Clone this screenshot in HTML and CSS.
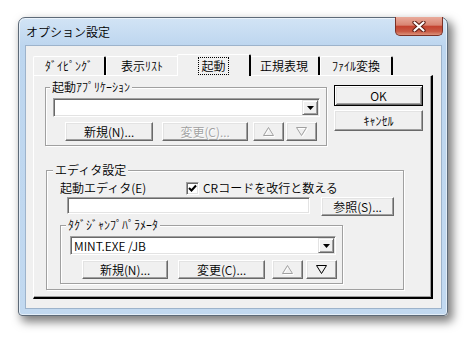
FILE: index.html
```html
<html>
  <head>
    <title>オプション設定</title>
    <link rel="stylesheet" href="styles.css">
  </head>
  <body>
    <div class="window">
      <div class="titlebar">
        <span class="title">オプション設定</span>
        <div class="close">
          <svg width="14" height="11" viewBox="0 0 14 11">
            <path d="M2.5 1.5 L11.5 9.5 M11.5 1.5 L2.5 9.5" stroke="#5a1d14" stroke-width="4.2" stroke-linecap="round"/>
            <path d="M2.5 1.5 L11.5 9.5 M11.5 1.5 L2.5 9.5" stroke="#fff" stroke-width="2.2" stroke-linecap="round"/>
          </svg>
        </div>
      </div>
      <div class="client">
        <div class="tabs">
          <div class="tab t1">ﾀﾞｲﾋﾟﾝｸﾞ</div>
          <div class="tab t2">表示ﾘｽﾄ</div>
          <div class="tab t3 active"><span class="focus">起動</span></div>
          <div class="tab t4">正規表現</div>
          <div class="tab t5">ﾌｧｲﾙ変換</div>
        </div>
        <div class="panel">
          <div class="top-row">
            <div class="group g-app">
              <div class="group-label">起動ｱﾌﾟﾘｹｰｼｮﾝ</div>
              <div class="group-body">
                <div class="combo sunken c-app">
                  <span class="combo-text"></span>
                  <span class="drop"><svg width="7" height="4" viewBox="0 0 7 4"><polygon points="0,0 7,0 3.5,4" fill="#000"/></svg></span>
                </div>
                <div class="btn-row">
                  <button class="btn b-new">新規(N)...</button>
                  <button class="btn b-edit off">変更(C)...</button>
                  <button class="btn b-arrow off"><svg width="13" height="10" viewBox="0 0 13 10"><polygon points="1.5,8.5 11.5,8.5 6.5,0.5" fill="none" stroke="#fff" transform="translate(1,1)"/><polygon points="1.5,8.5 11.5,8.5 6.5,0.5" fill="none" stroke="#a0a0a0"/></svg></button>
                  <button class="btn b-arrow b-down off"><svg width="13" height="10" viewBox="0 0 13 10"><polygon points="1.5,0.5 11.5,0.5 6.5,8.5" fill="none" stroke="#fff" transform="translate(1,1)"/><polygon points="1.5,0.5 11.5,0.5 6.5,8.5" fill="none" stroke="#a0a0a0"/></svg></button>
                </div>
              </div>
            </div>
            <div class="side">
              <button class="btn default">OK</button>
              <button class="btn b-cancel">ｷｬﾝｾﾙ</button>
            </div>
          </div>

          <div class="group g-editor">
            <div class="group-label">エディタ設定</div>
            <div class="group-body">
              <div class="editor-row">
                <span class="editor-label">起動エディタ(E)</span>
                <span class="checkbox sunken"><svg width="9" height="9" viewBox="0 0 9 9"><path d="M1 4 L3.5 6.5 L8 1.5" fill="none" stroke="#000" stroke-width="2"/></svg></span>
                <span class="check-text">CRコードを改行と数える</span>
              </div>
              <div class="path-row">
                <div class="edit sunken"></div>
                <button class="btn b-browse">参照(S)...</button>
              </div>
              <div class="group g-tag">
                <div class="group-label">ﾀｸﾞｼﾞｬﾝﾌﾟﾊﾟﾗﾒｰﾀ</div>
                <div class="group-body">
                  <div class="combo sunken c-tag">
                    <span class="combo-text">MINT.EXE /JB</span>
                    <span class="drop"><svg width="7" height="4" viewBox="0 0 7 4"><polygon points="0,0 7,0 3.5,4" fill="#000"/></svg></span>
                  </div>
                  <div class="btn-row">
                    <button class="btn b-new2">新規(N)...</button>
                    <button class="btn b-edit2">変更(C)...</button>
                    <button class="btn b-arrow off"><svg width="13" height="10" viewBox="0 0 13 10"><polygon points="1.5,8.5 11.5,8.5 6.5,0.5" fill="none" stroke="#fff" transform="translate(1,1)"/><polygon points="1.5,8.5 11.5,8.5 6.5,0.5" fill="none" stroke="#a0a0a0"/></svg></button>
                    <button class="btn b-arrow b-down2"><svg width="13" height="10" viewBox="0 0 13 10"><polygon points="1.5,0.5 11.5,0.5 6.5,8.5" fill="none" stroke="#000"/></svg></button>
                  </div>
                </div>
              </div>
            </div>
          </div>
        </div>
      </div>
    </div>
  </body>
</html>
```
FILE: styles.css
```css
* {
  box-sizing: border-box;
}

body {
  margin: 0;
  background: #fff;
  font-family: "Noto Sans CJK JP", sans-serif;
  font-size: 12px;
  font-weight: 350;
  color: #000;
}

/* window frame */
.window {
  margin: 17px 0 0 18px;
  width: 430px;
  height: 299px;
  border: 1px solid #5d6a78;
  border-radius: 7px 7px 4px 4px;
  background: linear-gradient(#d2e4f5, #bdd6ef 28px, #c2d9f0);
  box-shadow: inset 0 0 0 1px rgba(255, 255, 255, 0.55), 4px 5px 10px 1px rgba(0, 0, 0, 0.5);
  padding: 0 5px 6px 6px;
  display: flex;
  flex-direction: column;
}
.titlebar {
  height: 27px;
  display: flex;
  justify-content: space-between;
}
.title {
  align-self: center;
  padding-left: 1px;
  line-height: 14px;
}
.close {
  width: 48px;
  height: 19px;
  margin: -1px -1px 0 0;
  border: 1px solid #7b3126;
  border-top: 0;
  border-radius: 0 0 5px 5px;
  background: linear-gradient(#e9ab9c, #d98572 45%, #c4432f 52%, #c85a44 80%, #dc927b);
  display: flex;
  align-items: center;
  justify-content: center;
}
.client {
  flex: 1;
  background: #f0f0f0;
  border: 1px solid #9db3cb;
  padding: 8px 0 0 7px;
}

/* tabs */
.tabs {
  display: flex;
  align-items: flex-end;
  height: 21px;
  position: relative;
  z-index: 1;
}
.tab {
  height: 19px;
  border-top: 1px solid #fff;
  border-left: 1px solid #fff;
  border-right: 2px solid #000;
  border-radius: 2px 2px 0 0;
  background: #f0f0f0;
  display: flex;
  align-items: center;
  justify-content: center;
  line-height: 14px;
}
.t1 { width: 73px; }
.t2 { width: 73px; }
.t3 { width: 74px; }
.t4 { width: 71px; }
.t5 { width: 73px; }
.tab.active {
  height: 22px;
  margin: 0 -2px -1px;
  position: relative;
  z-index: 2;
}
.focus {
  outline: 1px dotted #000;
  outline-offset: 1px;
  padding: 0 1px;
}
.panel {
  width: 400px;
  height: 224px;
  border-top: 1px solid #fff;
  border-left: 1px solid #fff;
  border-right: 2px solid #000;
  border-bottom: 2px solid #000;
  box-shadow: inset -1px -1px 0 #a0a0a0;
}

/* group boxes */
.group {
  border: 1px solid #a0a0a0;
  box-shadow: inset 1px 1px 0 #fff, 1px 1px 0 #fff;
}
.group-label {
  display: table;
  margin-top: -7px;
  padding: 0 2px;
  line-height: 12px;
  background: #f0f0f0;
}
.top-row {
  display: flex;
  align-items: flex-start;
}
.g-app {
  width: 282px;
  margin: 11px 0 0 11px;
}
.g-app .group-label { margin-left: 4px; }
.g-app .group-body { padding: 5px 0 4px 7px; }

.side {
  display: flex;
  flex-direction: column;
  gap: 4px;
  margin: 9px 0 0 7px;
}
.side .btn {
  width: 89px;
  height: 21px;
}

.g-editor {
  width: 358px;
  margin: 24px 0 0 12px;
}
.g-editor > .group-label { margin-left: 6px; }
.g-editor > .group-body { padding: 5px 0 5px 13px; }

.editor-row {
  display: flex;
  align-items: center;
  height: 14px;
  line-height: 14px;
}
.editor-label { width: 126px; }
.checkbox {
  width: 13px;
  height: 13px;
  display: flex;
  align-items: center;
  justify-content: center;
}
.check-text { margin-left: 4px; }
.path-row {
  display: flex;
  align-items: flex-start;
  margin-top: 2px;
}
.edit {
  width: 243px;
  height: 17px;
  margin: 0 11px 0 7px;
}
.b-browse { width: 73px; }

.g-tag {
  width: 283px;
  margin-top: 9px;
}
.g-tag .group-label { margin-left: 5px; }
.g-tag .group-body { padding: 5px 0 4px 9px; }

/* controls */
.sunken {
  background: #fff;
  border: 1px solid;
  border-color: #a0a0a0 #fff #fff #a0a0a0;
  box-shadow: inset 1px 1px 0 #696969, inset -1px -1px 0 #e3e3e3;
}
.combo {
  height: 19px;
  padding: 1px;
  display: flex;
  justify-content: space-between;
}
.c-app { width: 267px; }
.c-tag { width: 266px; }
.combo-text {
  padding: 1px 0 0 2px;
  line-height: 14px;
}
.drop {
  width: 16px;
  height: 15px;
  background: #f0f0f0;
  border: 1px solid;
  border-color: #e3e3e3 #696969 #696969 #e3e3e3;
  box-shadow: inset 1px 1px 0 #fff, inset -1px -1px 0 #a0a0a0;
  display: flex;
  align-items: center;
  justify-content: center;
}
.btn-row {
  display: flex;
  margin-top: 5px;
}
.btn {
  height: 19px;
  padding: 0;
  font: inherit;
  line-height: 14px;
  color: #000;
  background: #f0f0f0;
  border: 1px solid;
  border-color: #fff #696969 #696969 #fff;
  box-shadow: inset -1px -1px 0 #a0a0a0, inset 1px 1px 0 #e3e3e3;
  display: flex;
  align-items: center;
  justify-content: center;
}
.btn.default {
  border: 1px solid #000;
  box-shadow: inset 1px 1px 0 #fff, inset -1px -1px 0 #696969, inset 2px 2px 0 #e3e3e3, inset -2px -2px 0 #a0a0a0;
}
.btn.off {
  color: #a0a0a0;
  text-shadow: 1px 1px 0 #fff;
}
.b-new { width: 88px; margin-left: 12px; }
.b-edit { width: 86px; margin-left: 9px; }
.b-arrow { width: 31px; margin-left: 5px; }
.b-down { margin-left: 2px; }
.b-new2 { width: 86px; margin-left: 12px; }
.b-edit2 { width: 87px; margin-left: 10px; }
.g-tag .b-arrow { margin-left: 7px; }
.g-tag .b-down2 { margin-left: 3px; }
```
